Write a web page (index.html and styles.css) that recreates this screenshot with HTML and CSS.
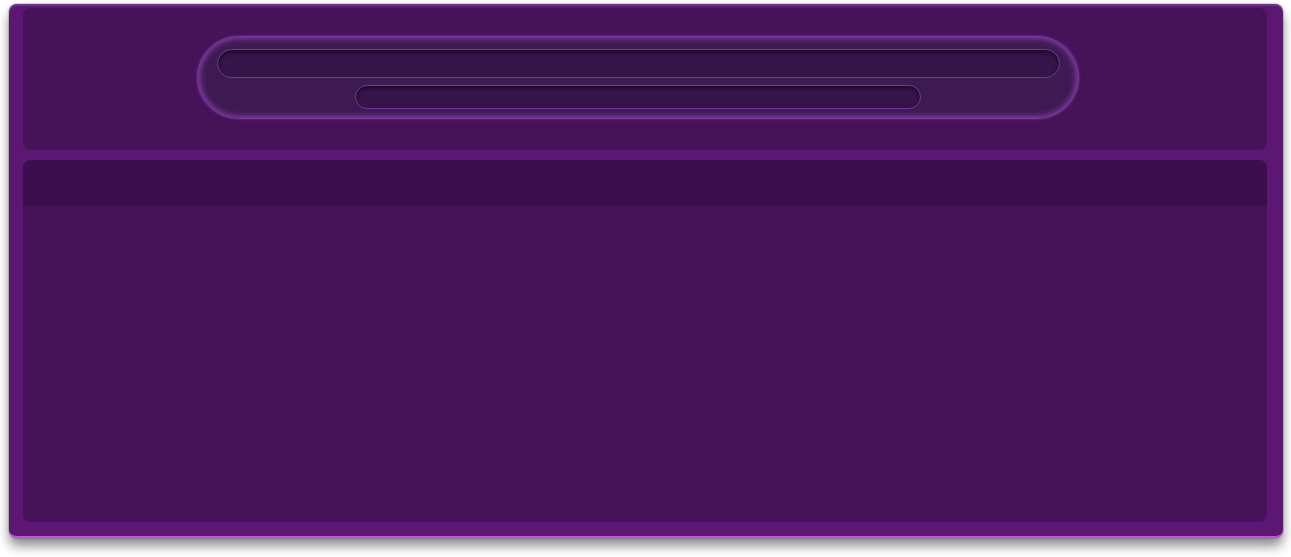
FILE: index.html
```html
<!DOCTYPE html>
<html lang="en">
<head>
<meta charset="utf-8">
<title>Panel</title>
<link rel="stylesheet" href="styles.css">
</head>
<body>
  <div class="frame">
    <section class="panel top-panel">
      <div class="pill">
        <div class="bar bar-main"></div>
        <div class="bar bar-sub"></div>
      </div>
    </section>
    <section class="panel main-panel">
      <div class="panel-header"></div>
      <div class="panel-body"></div>
    </section>
  </div>
</body>
</html>
```

FILE: styles.css
```css
html, body {
  margin: 0;
  padding: 0;
  background: #ffffff;
  font-family: "Liberation Sans", Arial, sans-serif;
}

body {
  min-height: 557px;
  padding-top: 4px;
  box-sizing: border-box;
}

.frame {
  box-sizing: border-box;
  width: 1274px;
  height: 534px;
  margin: 0 0 0 9px;
  padding: 4px 16px 14px 14px;
  background: #5b1772;
  border-radius: 8px;
  border-bottom: 2px solid #c94fe2;
  box-shadow: inset 0 2px 0 rgba(255, 255, 255, 0.12), 0 0 2px rgba(0, 0, 0, 0.55), 0 8px 12px rgba(0, 0, 0, 0.45);
  display: flex;
  flex-direction: column;
  gap: 10px;
}

.panel {
  background: #461358;
  border-radius: 8px;
}

.top-panel {
  height: 142px;
  flex: none;
  padding: 28px 0 0 174px;
  box-sizing: border-box;
}

.pill {
  box-sizing: border-box;
  width: 882px;
  height: 83px;
  border-radius: 42px;
  background: #3e1a52;
  border: 1px solid #7d37a0;
  box-shadow: inset 0 0 6px 1px rgba(168, 82, 210, 0.8), 0 0 3px rgba(160, 80, 200, 0.5);
  padding: 12px 18px 0 19px;
  display: flex;
  flex-direction: column;
  align-items: center;
  gap: 7px;
}

.bar {
  box-sizing: border-box;
  border-radius: 15px;
  background: #36164a;
  border: 1px solid #7634a0;
  box-shadow: inset 0 2px 5px rgba(12, 0, 22, 0.75);
}

.bar-main {
  width: 843px;
  height: 29px;
  align-self: stretch;
}

.bar-sub {
  width: 566px;
  height: 24px;
  margin-right: 1px;
}

.main-panel {
  flex: 1;
  display: flex;
  flex-direction: column;
  overflow: hidden;
}

.panel-header {
  height: 46px;
  background: #3c0f4c;
  flex: none;
}

.panel-body {
  flex: 1;
}
```
